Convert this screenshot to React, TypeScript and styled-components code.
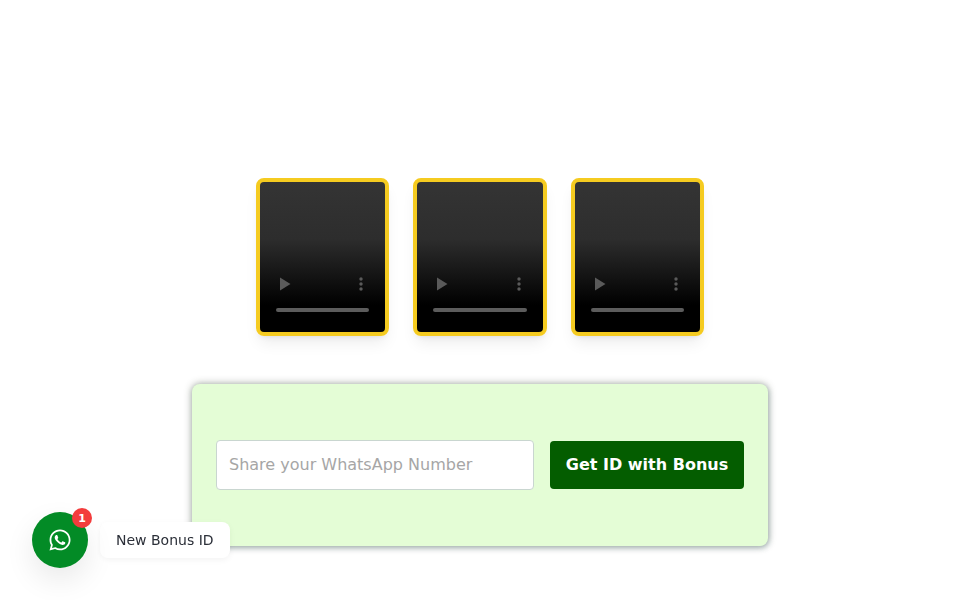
import React from "react";
import styled, { createGlobalStyle } from "styled-components";
import { FaWhatsapp } from "react-icons/fa";

const Global = createGlobalStyle`
  html, body { margin: 0; padding: 0; background: #fff; height: 100%; overflow: hidden; }
  body { font-family: "DejaVu Sans", sans-serif; }
`;

const Page = styled.main`
  display: flex;
  flex-direction: column;
  align-items: center;
  padding-top: 178px;
  gap: 48px;
`;

const VideoRow = styled.div`
  display: grid;
  grid-template-columns: repeat(3, 1fr);
  gap: 24px;
  width: 448px;
`;

const VideoCard = styled.div`
  box-sizing: border-box;
  height: 158px;
  border: 4px solid #f5cb20;
  border-radius: 8px;
  background: linear-gradient(180deg, #343434 0%, #2d2d2d 38%, #000 82%);
  box-shadow: 0 10px 15px -3px rgba(0,0,0,.07), 0 4px 6px -4px rgba(0,0,0,.1);
  display: flex;
  flex-direction: column;
  justify-content: flex-end;
  padding: 0 16px 20px;
`;

const Controls = styled.div`
  display: flex;
  align-items: center;
  justify-content: space-between;
  padding: 0 6px 0 3px;
  margin-bottom: 17px;
  height: 14px;
`;

const Track = styled.div`
  height: 4px;
  border-radius: 2px;
  background: #5c5c5c;
`;

const Form = styled.form`
  box-sizing: border-box;
  width: 576px;
  height: 162px;
  padding: 24px;
  display: flex;
  align-items: center;
  gap: 16px;
  background: #e4fdd6;
  border-radius: 8px;
  box-shadow: 0 0 7px 1px rgba(60,70,50,.38), 1px 2px 5px rgba(60,110,130,.25);
`;

const NumberInput = styled.input`
  box-sizing: border-box;
  flex: 1;
  min-width: 0;
  height: 50px;
  padding: 0 12px 2px;
  border: 1px solid #c9d6d0;
  border-radius: 4px;
  background: #fff;
  font: 16px "DejaVu Sans", sans-serif;
  outline: none;
  &::placeholder { color: #a6a6a6; opacity: 1; }
`;

const Submit = styled.button`
  box-sizing: border-box;
  width: 194px;
  height: 48px;
  border: 0;
  border-radius: 4px;
  background: #045d00;
  color: #fff;
  font: bold 16px "DejaVu Sans", sans-serif;
  padding: 0 0 2px;
`;

const Floating = styled.div`
  position: fixed;
  left: 32px;
  top: 512px;
  display: flex;
  align-items: center;
  gap: 12px;
`;

const Bubble = styled.div`
  position: relative;
  width: 56px;
  height: 56px;
  border-radius: 50%;
  background: #038b26;
  color: #fff;
  display: flex;
  align-items: center;
  justify-content: center;
  box-shadow: 0 12px 30px rgba(0,0,0,.09);
`;

const Badge = styled.span`
  position: absolute;
  top: -4px;
  right: -4px;
  width: 20px;
  height: 20px;
  border-radius: 50%;
  background: #f33c3c;
  color: #fff;
  font-size: 11px;
  font-weight: bold;
  display: flex;
  align-items: center;
  justify-content: center;
`;

const Label = styled.div`
  box-sizing: border-box;
  height: 36px;
  padding: 0 16px;
  display: flex;
  align-items: center;
  background: #fff;
  border-radius: 8px;
  font-size: 14px;
  color: #2b2f38;
  box-shadow: 0 2px 6px rgba(0,0,0,.05);
`;

const Play = () => (
  <svg width="12" height="14" viewBox="0 0 12 14"><path d="M1 .5v13l10.5-6.5z" fill="#5a5a5a" /></svg>
);

const Dots = () => (
  <svg width="4" height="14" viewBox="0 0 4 14" fill="#5a5a5a">
    <circle cx="2" cy="2" r="1.7" /><circle cx="2" cy="7" r="1.7" /><circle cx="2" cy="12" r="1.7" />
  </svg>
);

const Video = () => (
  <VideoCard>
    <Controls><Play /><Dots /></Controls>
    <Track />
  </VideoCard>
);

export default function App() {
  return (
    <>
      <Global />
      <Page>
        <VideoRow><Video /><Video /><Video /></VideoRow>
        <Form onSubmit={(e) => e.preventDefault()}>
          <NumberInput placeholder="Share your WhatsApp Number" />
          <Submit type="submit">Get ID with Bonus</Submit>
        </Form>
      </Page>
      <Floating>
        <Bubble>
          <FaWhatsapp size={24} />
          <Badge>1</Badge>
        </Bubble>
        <Label>New Bonus ID</Label>
      </Floating>
    </>
  );
}
